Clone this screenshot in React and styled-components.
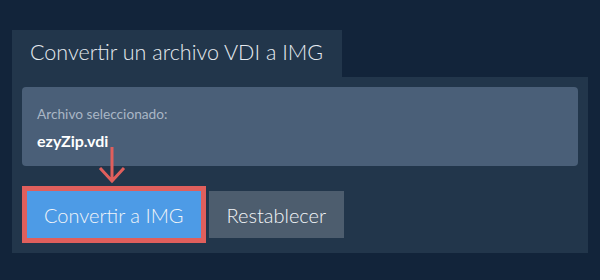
import React from 'react';
import styled, { createGlobalStyle } from 'styled-components';

const GlobalStyle = createGlobalStyle`
  html, body {
    margin: 0;
    padding: 0;
    background: #12243a;
    font-family: Lato, "Noto Sans", sans-serif;
  }
`;

const Page = styled.div`
  width: 600px;
  height: 280px;
  padding: 30px 12px 0;
  box-sizing: border-box;
  background: #12243a;
`;

const Tab = styled.div`
  display: inline-block;
  height: 47px;
  line-height: 44px;
  padding: 0 19px 0 18px;
  background: #22364b;
  color: #e6ebf0;
  font-size: 21.5px;
  font-weight: 300;
  box-sizing: border-box;
`;

const Panel = styled.div`
  background: #22364b;
  padding: 10px;
`;

const FileBox = styled.div`
  position: relative;
  height: 79px;
  box-sizing: border-box;
  padding: 18px 15px 0;
  background: #4a5f78;
  border-radius: 4px;
`;

const Label = styled.div`
  color: #a9b6c5;
  font-size: 13.7px;
  line-height: 18px;
`;

const FileName = styled.div`
  margin-top: 8px;
  color: #ffffff;
  font-size: 16px;
  font-weight: 700;
  line-height: 20px;
`;

const Arrow = styled.svg`
  position: absolute;
  left: 76px;
  top: 60px;
  overflow: visible;
`;

const Actions = styled.div`
  display: flex;
  align-items: center;
  gap: 3px;
  margin-top: 20px;
`;

const Highlight = styled.div`
  border: 5px solid #e05f5c;
  display: flex;
`;

const Button = styled.button`
  border: none;
  margin: 0;
  height: 47px;
  padding: 0 ${p => p.$pad}px;
  background: ${p => p.$bg};
  color: #f2f5f8;
  font-family: Lato, "Noto Sans", sans-serif;
  font-size: 20px;
  font-weight: 300;
  cursor: pointer;
`;

export default function App() {
  return (
    <>
      <GlobalStyle />
      <Page>
        <Tab>Convertir un archivo VDI a IMG</Tab>
        <Panel>
          <FileBox>
            <Label>Archivo seleccionado:</Label>
            <FileName>ezyZip.vdi</FileName>
            <Arrow width="28" height="36" viewBox="0 0 28 36">
              <path d="M14 0 V34 M2 21 L14 34 L26 21" fill="none" stroke="#e05f5c" strokeWidth="3" />
            </Arrow>
          </FileBox>
          <Actions>
            <Highlight>
              <Button $bg="#4d9be6" $pad={17}>Convertir a IMG</Button>
            </Highlight>
            <Button $bg="#4d5d6e" $pad={18}>Restablecer</Button>
          </Actions>
        </Panel>
      </Page>
    </>
  );
}
